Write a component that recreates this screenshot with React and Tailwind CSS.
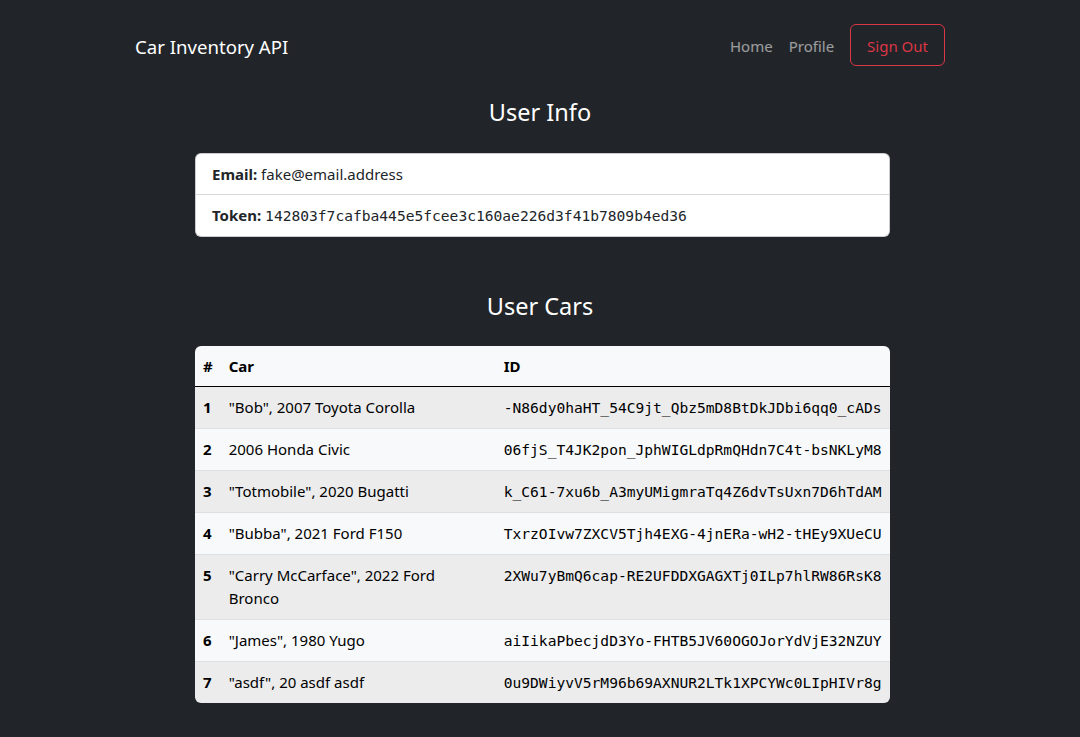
import React from 'react';

const cars = [
  { n: 1, car: '"Bob", 2007 Toyota Corolla', id: '-N86dy0haHT_54C9jt_Qbz5mD8BtDkJDbi6qq0_cADs' },
  { n: 2, car: '2006 Honda Civic', id: '06fjS_T4JK2pon_JphWIGLdpRmQHdn7C4t-bsNKLyM8' },
  { n: 3, car: '"Totmobile", 2020 Bugatti', id: 'k_C61-7xu6b_A3myUMigmraTq4Z6dvTsUxn7D6hTdAM' },
  { n: 4, car: '"Bubba", 2021 Ford F150', id: 'TxrzOIvw7ZXCV5Tjh4EXG-4jnERa-wH2-tHEy9XUeCU' },
  { n: 5, car: '"Carry McCarface", 2022 Ford Bronco', id: '2XWu7yBmQ6cap-RE2UFDDXGAGXTj0ILp7hlRW86RsK8' },
  { n: 6, car: '"James", 1980 Yugo', id: 'aiIikaPbecjdD3Yo-FHTB5JV60OGOJorYdVjE32NZUY' },
  { n: 7, car: '"asdf", 20 asdf asdf', id: '0u9DWiyvV5rM96b69AXNUR2LTk1XPCYWc0LIpHIVr8g' },
];

const sans = "font-['Noto_Sans','Open_Sans',sans-serif]";
const mono = "font-['DejaVu_Sans_Mono','Liberation_Mono',monospace] text-[14.6px]";

export default function App() {
  return (
    <div className={`min-h-[737px] bg-[#212529] ${sans} text-[15px]`}>
      <div className="w-[810px] mx-auto">
        <nav className="flex items-center justify-between pt-6">
          <span className="pt-[3px] text-white text-[18.6px]">Car Inventory API</span>
          <div className="flex items-center">
            <span className="pt-[3px] px-2 text-white/55">Home</span>
            <span className="pt-[3px] px-2 text-white/55">Profile</span>
            <button className="ml-2 h-[42px] pt-[2px] px-4 border border-[#dc3545] rounded-md text-[#dc3545]">
              Sign Out
            </button>
          </div>
        </nav>

        <h3 className="mt-[30px] text-center text-white text-[23.5px] leading-[33px]">User Info</h3>
        <div className="mt-[24px] ml-[60px] w-[695px] bg-white rounded-md border border-black/20 text-[#212529]">
          <div className="px-4 py-2 leading-6 border-b border-black/15">
            <b>Email:</b> fake@email.address
          </div>
          <div className="px-4 py-2 leading-6">
            <b>Token:</b> <span className={mono}>142803f7cafba445e5fcee3c160ae226d3f41b7809b4ed36</span>
          </div>
        </div>

        <h3 className="mt-[53px] text-center text-white text-[23.5px] leading-[33px]">User Cars</h3>
        <div className="mt-[23px] ml-[60px] w-[695px] rounded-md overflow-hidden">
          <table className="w-full border-collapse text-black">
            <thead>
              <tr className="bg-[#f8f9fa] border-b border-black">
                <th className="w-[25px] px-2 py-2 leading-6 text-left">#</th>
                <th className="w-[275px] px-2 py-2 leading-6 text-left">Car</th>
                <th className="px-2 py-2 leading-6 text-left">ID</th>
              </tr>
            </thead>
            <tbody>
              {cars.map((c, i) => (
                <tr
                  key={c.n}
                  className={`${i % 2 === 0 ? 'bg-[#ececed]' : 'bg-[#f8f9fa]'} ${i < cars.length - 1 ? 'border-b border-[#dfe0e1]' : ''}`}
                >
                  <td className="px-2 py-[9px] leading-[23px] font-bold align-top">{c.n}</td>
                  <td className="px-2 py-[9px] leading-[23px] align-top">{c.car}</td>
                  <td className={`px-2 py-[9px] leading-[23px] align-top ${mono}`}>{c.id}</td>
                </tr>
              ))}
            </tbody>
          </table>
        </div>
      </div>
    </div>
  );
}
